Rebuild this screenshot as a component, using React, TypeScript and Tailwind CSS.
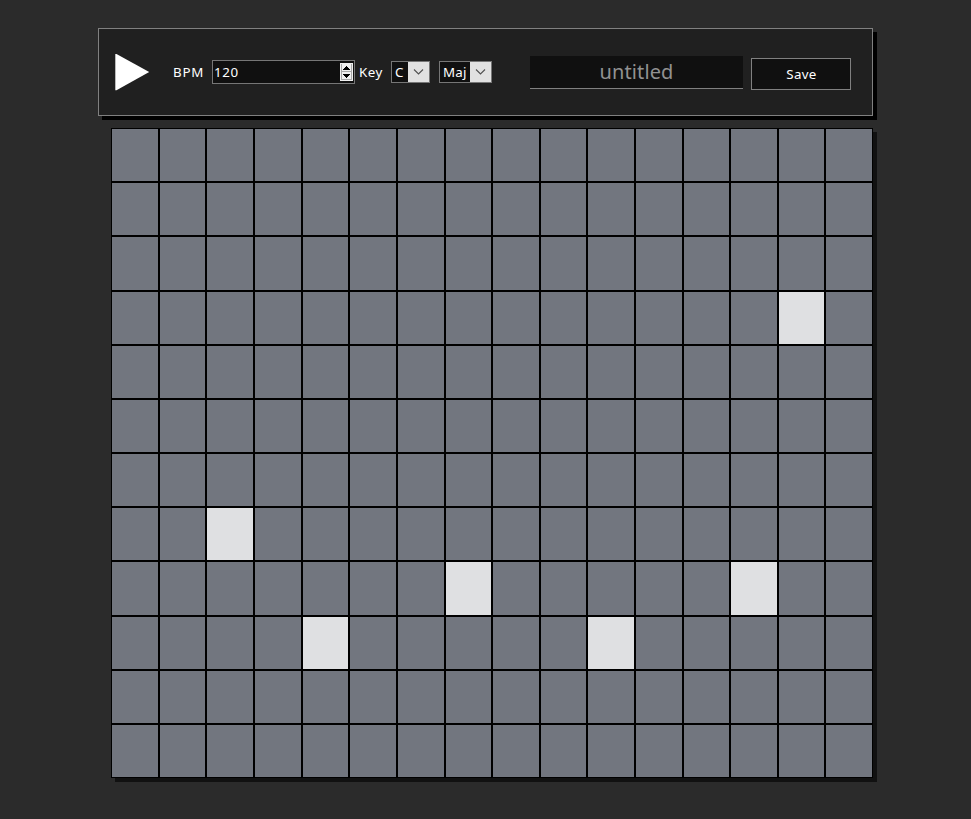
import React from "react";

const COLUMNS = 16;
const ROWS = 12;
const ACTIVE = new Set(["3-14", "7-2", "8-7", "8-13", "9-4", "9-10"]);

function PlayButton() {
  return (
    <button type="button" aria-label="Play" className="ml-4 h-[38px] w-[35px] shrink-0">
      <svg viewBox="0 0 35 38" className="block h-[38px] w-[35px]">
        <path d="M0.3 1 H1.5 L34.2 19 L1.5 37.2 H0.3 Z" fill="#fff" />
      </svg>
    </button>
  );
}

function TempoField() {
  return (
    <div className="ml-2 flex h-6 w-[143px] shrink-0 items-center justify-between border border-[#767676] bg-[#101010] pr-px pl-[1px]">
      <span className="leading-[18px] tracking-[0.6px]">120</span>
      <svg viewBox="0 0 13 18" className="h-[18px] w-[13px]" shapeRendering="crispEdges">
        <rect width="13" height="18" fill="#f0f0f0" />
        <rect x="1" y="1" width="1" height="16" fill="#a9a9a9" />
        <rect x="11" y="1" width="1" height="16" fill="#a9a9a9" />
        <rect x="1" y="8" width="11" height="1" fill="#a9a9a9" />
        <rect x="1" y="16" width="11" height="1" fill="#a9a9a9" />
        <path d="M6 3h1v1h1v1h1v1h1v1H3V6h1V5h1V4h1z" fill="#000" />
        <path d="M3 11h7v1H9v1H8v1H7v1H6v-1H5v-1H4v-1H3z" fill="#000" />
      </svg>
    </div>
  );
}

function Select({ value, className }: { value: string; className: string }) {
  return (
    <div className={`flex h-[22px] shrink-0 justify-between border border-[#767676] bg-[#101010] pl-[3px] ${className}`}>
      <span className="leading-5 tracking-[0.2px]">{value}</span>
      <span className="flex h-5 w-[21px] items-center justify-center bg-[#e1e1e1]">
        <svg viewBox="0 0 11 6" className="-mt-px h-[6px] w-[11px]">
          <path d="M1 0.5 L5.5 5 L10 0.5" fill="none" stroke="#505050" strokeWidth="1.1" />
        </svg>
      </span>
    </div>
  );
}

export default function App() {
  return (
    <main className="flex h-[819px] w-[971px] flex-col bg-[#2b2b2b] pt-7 pl-[98px] font-['Noto_Sans','Open_Sans',sans-serif] text-[13.33px] text-white">
      <header className="flex h-[88px] w-[775px] shrink-0 items-center border border-[#808080] bg-[#202020] shadow-[4px_4px_0_#000]">
        <PlayButton />
        <span className="ml-[23px] w-[31px] shrink-0 leading-5 tracking-[0.8px]">BPM</span>
        <TempoField />
        <span className="ml-1 w-8 shrink-0 leading-5 tracking-[0.5px]">Key</span>
        <Select value="C" className="w-[39px]" />
        <Select value="Maj" className="ml-[9px] w-[53px]" />
        <div className="ml-[38px] h-[33px] w-[213px] shrink-0 border-b border-[#808080] bg-[#101010] text-center text-[20px] leading-8 tracking-[0.1px] text-[#929292]">
          untitled
        </div>
        <button type="button" className="mt-1 ml-2 h-8 w-[100px] shrink-0 border border-[#808080] bg-[#101010] pl-px leading-[30px] tracking-[0.3px]">
          Save
        </button>
      </header>
      <section className="mt-3 ml-[13.25px] grid h-[650px] w-[761.75px] shrink-0 grid-cols-16 grid-rows-12 shadow-[4px_4px_0_#111]">
        {Array.from({ length: ROWS * COLUMNS }, (_, index) => {
          const key = `${Math.floor(index / COLUMNS)}-${index % COLUMNS}`;
          return (
            <div
              key={key}
              className={`border border-black ${ACTIVE.has(key) ? "bg-[#dfe0e2]" : "bg-[#72767f]"}`}
            />
          );
        })}
      </section>
    </main>
  );
}
